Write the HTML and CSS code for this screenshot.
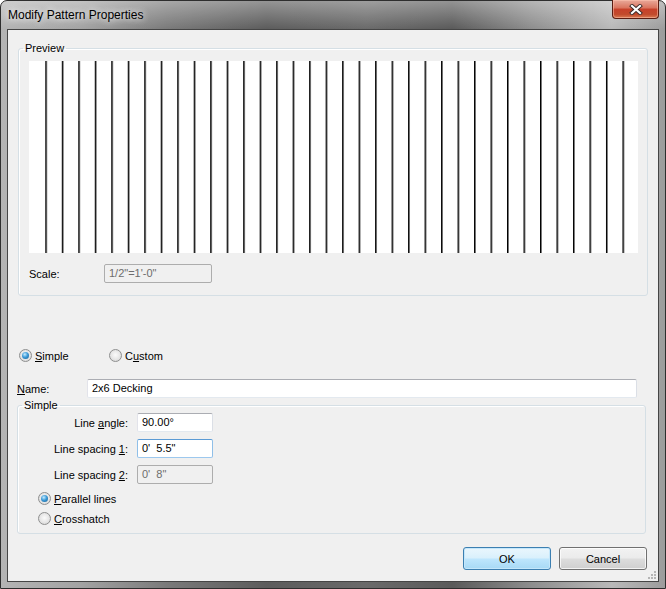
FILE: index.html
```html
<!DOCTYPE html>
<html lang="en">
<head>
    <meta charset="UTF-8">
    <title>Modify Pattern Properties</title>
    <link rel="stylesheet" href="styles.css">
</head>
<body>
    <div class="window">
        <div class="titlebar">
            <span class="title">Modify Pattern Properties</span>
            <button class="close" aria-label="Close">
                <svg width="14" height="11" viewBox="0 0 14 11">
                    <path d="M3 2 L11 9 M11 2 L3 9" stroke="#3a2a28" stroke-width="4" stroke-linecap="square"/>
                    <path d="M3 2 L11 9 M11 2 L3 9" stroke="#fff" stroke-width="2.2" stroke-linecap="square"/>
                </svg>
            </button>
        </div>
        <div class="client">
            <fieldset class="group preview-group">
                <legend>Preview</legend>
                <div class="preview-body">
                    <div class="canvas">
                        <svg width="608" height="192" viewBox="0 0 608 192">
                            <defs>
                                <pattern id="lines" patternUnits="userSpaceOnUse" x="16.3" y="0" width="16.49" height="192">
                                    <rect x="0" y="0" width="1.5" height="192" fill="#000"/>
                                </pattern>
                            </defs>
                            <rect x="15" y="0" width="582" height="192" fill="url(#lines)"/>
                        </svg>
                    </div>
                    <div class="scale-row">
                        <span class="scale-label">Scale:</span>
                        <div class="field disabled scale-field">1/2"=1'-0"</div>
                    </div>
                </div>
            </fieldset>

            <div class="mode-row">
                <div class="radio mode-simple"><span class="dot checked"></span><span><u>S</u>imple</span></div>
                <div class="radio"><span class="dot"></span><span>C<u>u</u>stom</span></div>
            </div>

            <div class="name-row">
                <span class="name-label"><u>N</u>ame:</span>
                <div class="field name-field">2x6 Decking</div>
            </div>

            <fieldset class="group simple-group">
                <legend>Simple</legend>
                <div class="params">
                    <span class="param-label">Line <u>a</u>ngle:</span>
                    <div class="field param-field">90.00°</div>
                    <span class="param-label">Line spacing <u>1</u>:</span>
                    <div class="field focused param-field">0'&nbsp; 5.5"</div>
                    <span class="param-label">Line spacing <u>2</u>:</span>
                    <div class="field disabled param-field">0'&nbsp; 8"</div>
                </div>
                <div class="line-options">
                    <div class="radio"><span class="dot checked"></span><span><u>P</u>arallel lines</span></div>
                    <div class="radio"><span class="dot"></span><span><u>C</u>rosshatch</span></div>
                </div>
            </fieldset>

            <div class="buttons">
                <button class="btn default">OK</button>
                <button class="btn">Cancel</button>
            </div>

            <svg class="grip" width="11" height="11" viewBox="0 0 11 11">
                <rect x="8" y="2" width="2" height="2" fill="#b5b5b5"/>
                <rect x="5" y="5" width="2" height="2" fill="#b5b5b5"/>
                <rect x="8" y="5" width="2" height="2" fill="#b5b5b5"/>
                <rect x="2" y="8" width="2" height="2" fill="#b5b5b5"/>
                <rect x="5" y="8" width="2" height="2" fill="#b5b5b5"/>
                <rect x="8" y="8" width="2" height="2" fill="#b5b5b5"/>
            </svg>
        </div>
    </div>
</body>
</html>
```

FILE: styles.css
```css
body {
    margin: 0;
    padding: 0;
    font-family: "Liberation Sans", Arial, sans-serif;
    font-size: 11px;
    color: #000;
    background: #fff;
}
.window {
    width: 666px;
    height: 589px;
    box-sizing: border-box;
    border: 1px solid #2e2e2e;
    border-radius: 7px 7px 0 0;
    padding: 0 6px 6px;
    display: flex;
    flex-direction: column;
    background:
        linear-gradient(to bottom, rgba(255, 255, 255, 0.35), rgba(255, 255, 255, 0) 28px),
        linear-gradient(to right, #b4b4b4 0%, #a3a3a3 12%, #7a7a7a 25%, #5c5c5c 40%, #6a6a6a 55%, #5a5a5a 68%, #8e8e8e 80%, #b9b9b9 92%, #9c9c9c 100%);
}
.titlebar {
    height: 28px;
    display: flex;
    justify-content: space-between;
    align-items: center;
    padding-left: 1px;
}
.title {
    font-size: 12px;
    color: #000;
    text-shadow: 0 0 6px rgba(255, 255, 255, 0.9), 0 0 10px rgba(255, 255, 255, 0.6);
}
.close {
    align-self: flex-start;
    margin-top: -1px;
    width: 47px;
    height: 19px;
    padding: 0;
    border: 1px solid #5a1d12;
    border-top: none;
    border-radius: 0 0 4px 4px;
    background: linear-gradient(to bottom, #e9a99a 0%, #d9735d 45%, #c7402a 50%, #c24a2c 80%, #d97a52 100%);
    box-shadow: inset 0 0 0 1px rgba(255, 200, 180, 0.5);
    display: flex;
    align-items: center;
    justify-content: center;
}
.client {
    flex: 1;
    position: relative;
    border: 1px solid #454545;
    background: #f0f0f0;
    padding-top: 11px;
}

/* group boxes */
.group {
    margin: 0;
    padding: 0;
    border: 1px solid #d5dfe5;
    border-radius: 3px;
    box-shadow: inset 1px 1px 0 #fff;
}
.group legend {
    margin-left: 4px;
    padding: 0 2px;
    line-height: 14px;
}
.preview-group {
    margin: 0 10px;
}
.preview-body {
    padding: 6px 9px 12px 10px;
}
.canvas {
    height: 192px;
    background: #fff;
}
.canvas svg {
    display: block;
}
.scale-row {
    margin-top: 11px;
    display: flex;
    align-items: center;
}
.scale-label {
    width: 75px;
}
.scale-field {
    width: 108px;
}

/* text boxes */
.field {
    height: 19px;
    box-sizing: border-box;
    border: 1px solid;
    border-color: #abadb3 #dbdfe6 #e3e9ef #e2e3ea;
    border-radius: 2px;
    background: #fff;
    padding: 0 4px;
    line-height: 17px;
    white-space: nowrap;
}
.field.disabled {
    background: #f0f0f0;
    border-color: #adadad;
    color: #6d6d6d;
}
.field.focused {
    border-color: #5b9bd5 #8fbfe8 #9cc8ee #8fbfe8;
}

/* radio buttons */
.radio {
    display: flex;
    align-items: center;
    height: 15px;
}
.dot {
    width: 13px;
    height: 13px;
    box-sizing: border-box;
    border-radius: 50%;
    border: 1px solid #8e8f8f;
    background: radial-gradient(circle at 50% 45%, #fbfbfb 0, #e6e6e6 55%, #cdcdcd 100%);
    margin-right: 3px;
    position: relative;
}
.dot.checked::after {
    content: "";
    position: absolute;
    inset: 2px;
    border-radius: 50%;
    background: radial-gradient(circle at 40% 35%, #c6ecff 0, #3d9bd8 45%, #115b90 100%);
}
.mode-row {
    margin: 52px 0 0 11px;
    display: flex;
}
.mode-simple {
    width: 90px;
}
.name-row {
    margin: 16px 0 0 9px;
    display: flex;
    align-items: center;
}
.name-label {
    width: 70px;
}
.name-field {
    width: 550px;
}

.simple-group {
    margin: 0 12px 0 9px;
    padding-bottom: 7px;
}
.params {
    padding-top: 1px;
    display: grid;
    grid-template-columns: 110px 76px;
    column-gap: 9px;
    row-gap: 7px;
    align-items: center;
}
.param-label {
    text-align: right;
}
.line-options {
    margin: 7px 0 0 20px;
    display: flex;
    flex-direction: column;
    gap: 5px;
}

/* buttons */
.buttons {
    margin-top: 13px;
    padding-right: 11px;
    display: flex;
    justify-content: flex-end;
    gap: 8px;
}
.btn {
    width: 88px;
    height: 23px;
    padding: 0;
    font-family: "Liberation Sans", Arial, sans-serif;
    font-size: 11px;
    color: #000;
    border: 1px solid #707070;
    border-radius: 3px;
    background: linear-gradient(to bottom, #f2f2f2 0%, #ebebeb 48%, #dddddd 52%, #cfcfcf 100%);
    box-shadow: inset 0 0 0 1px rgba(255, 255, 255, 0.75);
}
.btn.default {
    border-color: #3c7fb1;
    background: linear-gradient(to bottom, #eaf6fd 0%, #d9f0fc 48%, #bee6fd 52%, #a7d9f5 100%);
    box-shadow: inset 0 0 0 1px #c4e7fb;
}
.grip {
    position: absolute;
    right: 1px;
    bottom: 1px;
}
```
